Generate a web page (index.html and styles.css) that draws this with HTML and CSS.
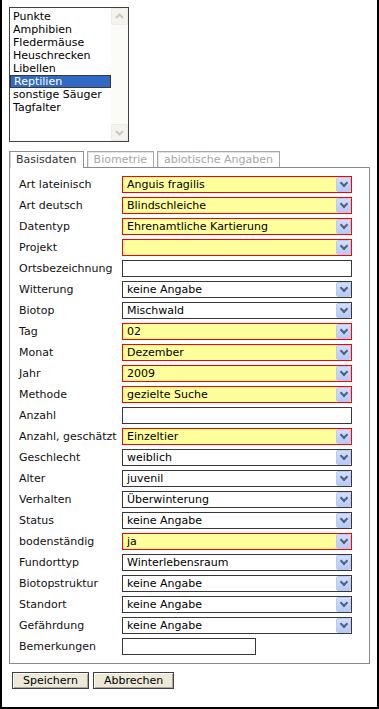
FILE: index.html
```html
<!DOCTYPE html>
<html>
<head>
<meta charset="utf-8">
<link rel="stylesheet" href="styles.css">
</head>
<body>
<div class="frame">
  <div class="listbox">
    <ul class="items">
      <li>Punkte</li>
      <li>Amphibien</li>
      <li>Fledermäuse</li>
      <li>Heuschrecken</li>
      <li>Libellen</li>
      <li class="sel">Reptilien</li>
      <li>sonstige Säuger</li>
      <li>Tagfalter</li>
    </ul>
    <div class="scrollbar">
      <div class="sb-btn"><svg width="15" height="15" viewBox="0 0 15 15"><path d="M4 9 L7.5 5.5 L11 9" fill="none" stroke="#c9c9c0" stroke-width="2"/></svg></div>
      <div class="sb-track"></div>
      <div class="sb-btn"><svg width="15" height="15" viewBox="0 0 15 15"><path d="M4 6 L7.5 9.5 L11 6" fill="none" stroke="#c9c9c0" stroke-width="2"/></svg></div>
    </div>
  </div>

  <div class="tabs">
    <div class="tab active">Basisdaten</div>
    <div class="tab">Biometrie</div>
    <div class="tab">abiotische Angaben</div>
  </div>

  <div class="panel">
    <div class="lbl">Art lateinisch</div><div class="sel req"><span>Anguis fragilis</span><i class="arr"></i></div>
    <div class="lbl">Art deutsch</div><div class="sel req"><span>Blindschleiche</span><i class="arr"></i></div>
    <div class="lbl">Datentyp</div><div class="sel req"><span>Ehrenamtliche Kartierung</span><i class="arr"></i></div>
    <div class="lbl">Projekt</div><div class="sel req"><span></span><i class="arr"></i></div>
    <div class="lbl">Ortsbezeichnung</div><div class="txt"></div>
    <div class="lbl">Witterung</div><div class="sel"><span>keine Angabe</span><i class="arr"></i></div>
    <div class="lbl">Biotop</div><div class="sel"><span>Mischwald</span><i class="arr"></i></div>
    <div class="lbl">Tag</div><div class="sel req"><span>02</span><i class="arr"></i></div>
    <div class="lbl">Monat</div><div class="sel req"><span>Dezember</span><i class="arr"></i></div>
    <div class="lbl">Jahr</div><div class="sel req"><span>2009</span><i class="arr"></i></div>
    <div class="lbl">Methode</div><div class="sel req"><span>gezielte Suche</span><i class="arr"></i></div>
    <div class="lbl">Anzahl</div><div class="txt"></div>
    <div class="lbl">Anzahl, geschätzt</div><div class="sel req"><span>Einzeltier</span><i class="arr"></i></div>
    <div class="lbl">Geschlecht</div><div class="sel"><span>weiblich</span><i class="arr"></i></div>
    <div class="lbl">Alter</div><div class="sel"><span>juvenil</span><i class="arr"></i></div>
    <div class="lbl">Verhalten</div><div class="sel"><span>Überwinterung</span><i class="arr"></i></div>
    <div class="lbl">Status</div><div class="sel"><span>keine Angabe</span><i class="arr"></i></div>
    <div class="lbl">bodenständig</div><div class="sel req"><span>ja</span><i class="arr"></i></div>
    <div class="lbl">Fundorttyp</div><div class="sel"><span>Winterlebensraum</span><i class="arr"></i></div>
    <div class="lbl">Biotopstruktur</div><div class="sel"><span>keine Angabe</span><i class="arr"></i></div>
    <div class="lbl">Standort</div><div class="sel"><span>keine Angabe</span><i class="arr"></i></div>
    <div class="lbl">Gefährdung</div><div class="sel"><span>keine Angabe</span><i class="arr"></i></div>
    <div class="lbl">Bemerkungen</div><div class="txt short"></div>
  </div>

  <div class="buttons">
    <div class="btn">Speichern</div>
    <div class="btn">Abbrechen</div>
  </div>
</div>
</body>
</html>
```
FILE: styles.css
```css
* { box-sizing: border-box; }
html, body { margin: 0; padding: 0; background: #fff; }
body {
  font-family: "DejaVu Sans", Verdana, sans-serif;
  font-size: 11px;
  color: #000;
}
.frame {
  width: 379px;
  height: 709px;
  border: 2px solid #000;
  border-top: 0;
  padding: 7px 0 0 7px;
  display: flex;
  flex-direction: column;
  align-items: flex-start;
}
.listbox {
  width: 120px;
  height: 135px;
  border: 1px solid #404040;
  display: flex;
}
.items {
  list-style: none;
  margin: 0;
  padding: 2px 0 0 0;
  width: 101px;
  line-height: 13px;
}
.items li { padding-left: 3px; height: 13px; white-space: nowrap; }
.items li.sel { background: #316ac5; color: #fff; }
.scrollbar {
  width: 17px;
  display: flex;
  flex-direction: column;
  background: #f8f8f4;
}
.sb-btn {
  width: 17px;
  height: 17px;
  border: 1px solid #ecebe4;
  background: #f4f3ee;
  border-radius: 2px;
  display: flex;
  align-items: center;
  justify-content: center;
}
.sb-track { flex: 1; background: #fbfbf8; }

.tabs {
  margin-top: 9px;
  display: flex;
  gap: 3px;
  height: 17px;
  position: relative;
  z-index: 1;
}
.tab {
  height: 16px;
  padding: 0 6px;
  border: 1px solid #a8a8a8;
  border-bottom: 0;
  line-height: 15px;
  color: #a6a6a6;
  background: #fff;
  box-shadow: inset 1px 1px 0 #e4e4e4;
}
.tab.active {
  height: 17px;
  color: #333;
  border-color: #919191;
  box-shadow: inset 1px 0 0 #d0d0d0;
  padding: 0 6px 0 6px;
}

.panel {
  margin-top: -1px;
  width: 361px;
  height: 497px;
  border: 1px solid #8a8a8a;
  padding: 8px 0 0 9px;
  display: grid;
  grid-template-columns: 103px 230px;
  grid-auto-rows: 17px;
  row-gap: 4px;
  align-items: center;
}
.lbl { white-space: nowrap; color: #111; line-height: 13px; }
.sel {
  height: 17px;
  border: 1px solid #383838;
  background: #fff;
  display: flex;
  align-items: center;
  padding-left: 4px;
  position: relative;
}
.sel span { flex: 1; line-height: 13px; white-space: nowrap; }
.sel.req { border-color: #ff0000; background: #ffff9c; }
.arr {
  width: 15px;
  height: 15px;
  border: 1px solid #b9cbf3;
  border-radius: 2px;
  background: linear-gradient(#d2defc, #b7c9f6);
  position: relative;
}
.arr::after {
  content: "";
  position: absolute;
  left: 4px;
  top: 2px;
  width: 4px;
  height: 4px;
  border-right: 2px solid #4d6185;
  border-bottom: 2px solid #4d6185;
  transform: rotate(45deg);
}
.txt {
  height: 17px;
  border: 1px solid #383838;
  background: #fff;
}
.txt.short { width: 134px; }

.buttons {
  margin-top: 8px;
  margin-left: 3px;
  display: flex;
  gap: 4px;
}
.btn {
  height: 17px;
  padding: 0 10px;
  border: 1px solid #404040;
  background: #ece9d8;
  line-height: 15px;
  box-shadow: inset 1px 1px 0 #fff, inset -1px -1px 0 #aca899;
}
```
